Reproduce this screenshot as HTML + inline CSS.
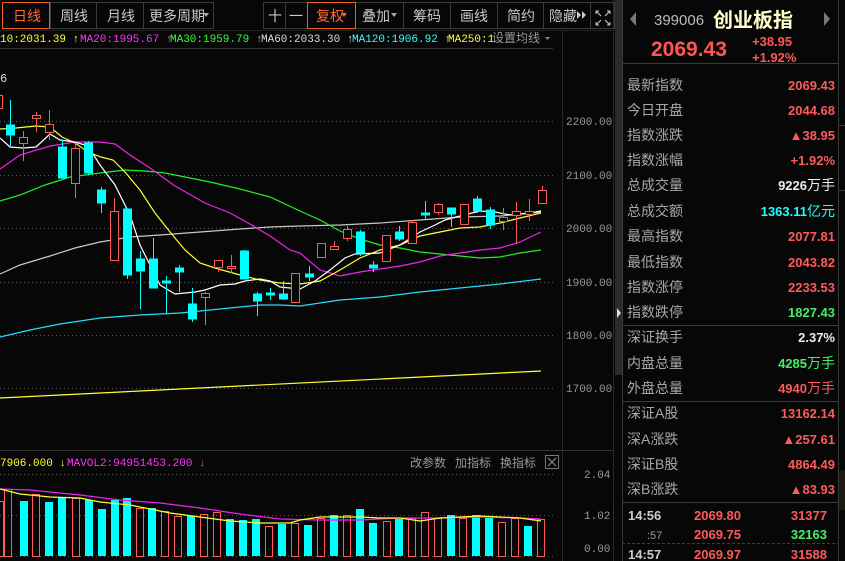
<!DOCTYPE html>
<html><head><meta charset="utf-8"><style>
html,body{margin:0;padding:0;background:#070707;width:845px;height:561px;overflow:hidden}
svg{display:block}
.t{font-family:"Liberation Sans","Noto Sans CJK SC",sans-serif}
.m{font-family:"Liberation Mono","Noto Sans CJK SC",monospace}
</style></head><body>
<svg width="845" height="561" viewBox="0 0 845 561" xmlns="http://www.w3.org/2000/svg">
<rect width="845" height="561" fill="#070707"/>
<!-- toolbar -->
<g fill="none" stroke="#3a3a3a">
<rect x="50.5" y="2.5" width="46" height="26"/><rect x="96.5" y="2.5" width="47" height="26"/><rect x="143.5" y="2.5" width="70" height="26"/>
<rect x="263.5" y="2.5" width="22" height="26"/><rect x="285.5" y="2.5" width="22" height="26"/>
<rect x="355.5" y="2.5" width="48" height="26"/><rect x="403.5" y="2.5" width="47" height="26"/><rect x="450.5" y="2.5" width="47" height="26"/><rect x="497.5" y="2.5" width="46" height="26"/><rect x="543.5" y="2.5" width="47" height="26"/><rect x="590.5" y="2.5" width="24" height="26"/>
</g>
<rect x="2.5" y="2.5" width="47" height="26" fill="none" stroke="#e8641e"/>
<rect x="307.5" y="2.5" width="48" height="26" fill="none" stroke="#e8641e"/>
<g class="t" font-size="14" fill="#c8c8c8">
<text x="13" y="21" fill="#ff6a2a">日线</text><text x="60" y="21">周线</text><text x="107" y="21">月线</text><text x="149" y="21">更多周期</text>
<text x="268" y="21">十</text><text x="289" y="21">一</text>
<text x="316" y="21" fill="#ff6a2a">复权</text><text x="362" y="21">叠加</text><text x="413" y="21">筹码</text><text x="460" y="21">画线</text><text x="507" y="21">简约</text><text x="549" y="21">隐藏</text>
</g>
<g fill="#aaa"><path d="M203 13h6l-3 4z"/><path d="M391 13h6l-3 4z"/></g>
<path d="M341 13h6l-3 4z" fill="#ff6a2a"/>
<path d="M577 11l4 4-4 4zM582 11l4 4-4 4z" fill="#ccc"/>
<g stroke="#ccc" fill="none" stroke-width="1"><path d="M596 11l5 5M596 11v3M596 11h3M610 11l-5 5M610 11v3M610 11h-3M596 25l5-5M596 25v-3M596 25h3M610 25l-5-5M610 25v-3M610 25h-3"/></g>
<line x1="0" y1="30.5" x2="612" y2="30.5" stroke="#222"/>
<!-- legend -->
<g class="m" font-size="11">
<text x="0" y="42" fill="#ffff33">10:2031.39 ↑</text>
<text x="80" y="42" fill="#ff33ff">MA20:1995.67 ↑</text>
<text x="170" y="42" fill="#33ff33">MA30:1959.79 ↑</text>
<text x="261" y="42" fill="#dddddd">MA60:2033.30 ↑</text>
<text x="352" y="42" fill="#33ffff">MA120:1906.92 ↑</text>
<text x="448" y="42" fill="#ffff33">MA250:1</text>
</g>
<text x="492" y="42" class="t" font-size="12" fill="#999">设置均线</text>
<path d="M545 37h5l-2.5 3z" fill="#888"/>
<line x1="0" y1="48.5" x2="553" y2="48.5" stroke="#333"/>
<text x="0" y="82" class="m" font-size="12" fill="#ddd">6</text>
<!-- axis separators -->
<line x1="562.5" y1="30" x2="562.5" y2="561" stroke="#2a2a2a"/>
<line x1="613.5" y1="0" x2="613.5" y2="561" stroke="#2a2a2a"/>
<rect x="615" y="0" width="7" height="375" fill="#2b2b2b"/>
<path d="M617 308l4 5-4 5z" fill="#ddd"/>
<!-- grid -->
<g stroke="#555" stroke-dasharray="1 3">
<line x1="0" y1="121.5" x2="555" y2="121.5"/><line x1="0" y1="175.5" x2="555" y2="175.5"/><line x1="0" y1="228.5" x2="555" y2="228.5"/><line x1="0" y1="282.5" x2="555" y2="282.5"/><line x1="0" y1="335.5" x2="555" y2="335.5"/><line x1="0" y1="388.5" x2="555" y2="388.5"/>
<line x1="0" y1="474.5" x2="555" y2="474.5"/><line x1="0" y1="515.5" x2="555" y2="515.5"/><line x1="0" y1="556.5" x2="555" y2="556.5"/>
</g>
<g class="m" font-size="11" fill="#999">
<text x="566" y="125">2200.00</text><text x="566" y="179">2100.00</text><text x="566" y="232">2000.00</text><text x="566" y="286">1900.00</text><text x="566" y="339">1800.00</text><text x="566" y="392">1700.00</text>
<text x="584" y="478">2.04</text><text x="584" y="519">1.02</text><text x="584" y="552">0.00</text>
</g>
<!-- MA lines -->
<g fill="none" stroke-width="1.2">
<polyline stroke="#ffff33" points="0,398 541,371"/>
<polyline stroke="#22ddff" points="0,337 30,330 60,324 100,318 140,315 180,313 220,309 260,305 280,305 300,306 340,300 380,297 420,292 460,288 500,284 541,279"/>
<polyline stroke="#c8c8c8" points="0,274 20,265 50,256 75,248 100,242 130,237 160,235 200,232 240,229 270,227 300,226 340,225 380,223 420,220 460,217 500,216 520,214 541,212"/>
<polyline stroke="#22ee22" points="0,201 20,195 45,185 70,177 100,173 125,170 145,171 165,173 185,177 210,182 240,189 270,197 300,211 320,220 340,231 360,239 380,245 400,248 420,252 440,254 460,256 480,258 500,257 520,253 541,250"/>
<polyline stroke="#ee22ee" points="0,169 20,155 50,146 75,142 100,142 115,144 130,155 150,168 175,186 205,203 230,213 250,224 270,236 290,250 300,253 320,270 340,276 360,272 380,269 400,266 420,262 440,256 460,253 480,250 500,248 520,242 541,232"/>
<polyline stroke="#ffff33" points="0,129 16,128 36,126 50,127 62,137 75,143 88,152 101,157 113,160 125,172 140,190 155,213 170,232 185,250 200,263 215,268 240,275 260,280 280,283 300,284 320,281 340,270 360,258 380,250 400,245 420,236 440,232 460,228 480,227 500,223 520,218 541,213"/>
<polyline stroke="#ffffff" points="0,138 10,147 23,148 36,147 50,134 60,140 75,142 88,146 100,165 115,185 130,215 140,245 150,265 160,285 175,294 195,292 205,290 220,285 235,284 245,281 260,279 270,281 280,287 300,289 315,281 330,270 345,258 355,254 380,253 400,245 420,232 435,225 445,220 460,216 480,211 495,212 510,215 530,213 541,211"/>
</g>
<!-- candles -->
<g stroke="#00ffff" fill="#00ffff">
<line x1="10.5" y1="100" x2="10.5" y2="146"/><rect x="6.5" y="125" width="8" height="10"/>
<line x1="62.5" y1="140" x2="62.5" y2="178"/><rect x="58.5" y="147" width="8" height="31"/>
<line x1="88.5" y1="141" x2="88.5" y2="175"/><rect x="84.5" y="143" width="8" height="30"/>
<line x1="101.5" y1="187" x2="101.5" y2="213"/><rect x="97.5" y="190" width="8" height="13"/>
<line x1="127.5" y1="209" x2="127.5" y2="279"/><rect x="123.5" y="209" width="8" height="66"/>
<line x1="140.5" y1="251" x2="140.5" y2="309"/><rect x="136.5" y="259" width="8" height="12"/>
<line x1="153.5" y1="238" x2="153.5" y2="288"/><rect x="149.5" y="259" width="8" height="29"/>
<line x1="166.5" y1="276" x2="166.5" y2="313"/><rect x="162.5" y="281" width="8" height="2"/>
<line x1="179.5" y1="265" x2="179.5" y2="292"/><rect x="175.5" y="268" width="8" height="4"/>
<line x1="192.5" y1="288" x2="192.5" y2="322"/><rect x="188.5" y="304" width="8" height="15"/>
<line x1="244.5" y1="250" x2="244.5" y2="279"/><rect x="240.5" y="251" width="8" height="28"/>
<line x1="257.5" y1="292" x2="257.5" y2="316"/><rect x="253.5" y="294" width="8" height="7"/>
<line x1="270.5" y1="288" x2="270.5" y2="300"/><rect x="266.5" y="293" width="8" height="2"/>
<line x1="283.5" y1="281" x2="283.5" y2="300"/><rect x="279.5" y="294" width="8" height="5"/>
<line x1="309.5" y1="266" x2="309.5" y2="281"/><rect x="305.5" y="274" width="8" height="3"/>
<line x1="360.5" y1="230" x2="360.5" y2="256"/><rect x="356.5" y="232" width="8" height="21"/>
<line x1="373.5" y1="261" x2="373.5" y2="272"/><rect x="369.5" y="265" width="8" height="3"/>
<line x1="399.5" y1="226" x2="399.5" y2="241"/><rect x="395.5" y="232" width="8" height="7"/>
<line x1="425.5" y1="201" x2="425.5" y2="219"/><rect x="421.5" y="213" width="8" height="2"/>
<line x1="451.5" y1="208" x2="451.5" y2="227"/><rect x="447.5" y="208" width="8" height="6"/>
<line x1="477.5" y1="196" x2="477.5" y2="213"/><rect x="473.5" y="199" width="8" height="12"/>
<line x1="490.5" y1="207" x2="490.5" y2="229"/><rect x="486.5" y="210" width="8" height="15"/>
</g>
<g stroke="#ff5a5a" fill="#070707">
<rect x="-4.5" y="95.5" width="7" height="13"/>
<line x1="23.5" y1="131" x2="23.5" y2="161"/><rect x="19.5" y="137.5" width="8" height="6"/>
<line x1="36.5" y1="112" x2="36.5" y2="132"/><rect x="32.5" y="115.5" width="8" height="3"/>
<line x1="49.5" y1="110" x2="49.5" y2="140"/><rect x="45.5" y="124.5" width="8" height="8"/>
<line x1="75.5" y1="143" x2="75.5" y2="198"/><rect x="71.5" y="148.5" width="8" height="35"/>
<line x1="114.5" y1="198" x2="114.5" y2="260"/><rect x="110.5" y="211.5" width="8" height="49"/>
<line x1="205.5" y1="292" x2="205.5" y2="325"/><rect x="201.5" y="293.5" width="8" height="4"/>
<line x1="218.5" y1="260" x2="218.5" y2="272"/><rect x="214.5" y="260.5" width="8" height="7"/>
<line x1="231.5" y1="255" x2="231.5" y2="273"/><rect x="227.5" y="266.5" width="8" height="2"/>
<rect x="291.5" y="273.5" width="8" height="29"/>
<rect x="317.5" y="243.5" width="8" height="14"/>
<line x1="334.5" y1="241" x2="334.5" y2="250"/><rect x="330.5" y="246.5" width="8" height="3"/>
<line x1="347.5" y1="226" x2="347.5" y2="241"/><rect x="343.5" y="229.5" width="8" height="9"/>
<rect x="382.5" y="235.5" width="8" height="26"/>
<line x1="412.5" y1="220" x2="412.5" y2="243"/><rect x="408.5" y="222.5" width="8" height="21"/>
<line x1="438.5" y1="203" x2="438.5" y2="215"/><rect x="434.5" y="204.5" width="8" height="8"/>
<rect x="460.5" y="204.5" width="8" height="20"/>
<line x1="503.5" y1="208" x2="503.5" y2="230"/><rect x="499.5" y="217.5" width="8" height="4"/>
<line x1="516.5" y1="202" x2="516.5" y2="244"/><rect x="512.5" y="211.5" width="8" height="4"/>
<line x1="529.5" y1="199" x2="529.5" y2="221"/><rect x="525.5" y="211.5" width="8" height="3"/>
<line x1="542.5" y1="186" x2="542.5" y2="204"/><rect x="538.5" y="190.5" width="8" height="13"/>
</g>
<!-- volume panel -->
<line x1="0" y1="450.5" x2="613" y2="450.5" stroke="#333"/>
<g class="m" font-size="11">
<text x="0" y="466" fill="#ffff33">7906.000 ↓</text>
<text x="67" y="466" fill="#ff33ff">MAVOL2:94951453.200 ↓</text>
</g>
<g class="t" font-size="12" fill="#999"><text x="410" y="467">改参数</text><text x="455" y="467">加指标</text><text x="500" y="467">换指标</text></g>
<rect x="545.5" y="455.5" width="13" height="13" fill="none" stroke="#777"/>
<path d="M548 458l8 8M556 458l-8 8" stroke="#999"/>
<g fill="#00ffff">
<rect x="20" y="501" width="8" height="55"/><rect x="45" y="502" width="8" height="54"/><rect x="58" y="497" width="8" height="59"/><rect x="85" y="500" width="8" height="56"/><rect x="98" y="509" width="8" height="47"/><rect x="111" y="500" width="8" height="56"/><rect x="123" y="498" width="8" height="58"/><rect x="148" y="508" width="8" height="48"/><rect x="187" y="516" width="8" height="40"/><rect x="226" y="519" width="8" height="37"/><rect x="239" y="520" width="8" height="36"/><rect x="252" y="519" width="8" height="37"/><rect x="278" y="524" width="8" height="32"/><rect x="304" y="525" width="8" height="31"/><rect x="330" y="515" width="8" height="41"/><rect x="356" y="509" width="8" height="47"/><rect x="369" y="523" width="8" height="33"/><rect x="395" y="519" width="8" height="37"/><rect x="447" y="515" width="8" height="41"/><rect x="472" y="515" width="8" height="41"/><rect x="485" y="518" width="8" height="38"/><rect x="524" y="526" width="8" height="30"/>
</g>
<g fill="none" stroke="#ff5a5a">
<rect x="-3.5" y="501.5" width="7" height="55"/><rect x="4.5" y="489.5" width="7" height="67"/><rect x="32.5" y="494.5" width="7" height="62"/><rect x="72.5" y="498.5" width="7" height="58"/><rect x="136.5" y="508.5" width="7" height="48"/><rect x="161.5" y="511.5" width="7" height="45"/><rect x="174.5" y="516.5" width="7" height="40"/><rect x="200.5" y="514.5" width="7" height="42"/><rect x="213.5" y="512.5" width="7" height="44"/><rect x="265.5" y="526.5" width="7" height="30"/><rect x="291.5" y="523.5" width="7" height="33"/><rect x="317.5" y="518.5" width="7" height="38"/><rect x="343.5" y="515.5" width="7" height="41"/><rect x="383.5" y="521.5" width="7" height="35"/><rect x="408.5" y="518.5" width="7" height="38"/><rect x="421.5" y="512.5" width="7" height="44"/><rect x="434.5" y="518.5" width="7" height="38"/><rect x="459.5" y="518.5" width="7" height="38"/><rect x="498.5" y="522.5" width="7" height="34"/><rect x="511.5" y="518.5" width="7" height="38"/><rect x="537.5" y="519.5" width="7" height="37"/>
</g>
<g fill="none" stroke-width="1.2">
<polyline stroke="#ee22ee" points="0,489 30,490 60,493 80,495 120,500 160,503 200,508 240,514 280,519 320,520 360,520 400,518 440,518 480,517 520,518 541,519"/>
<polyline stroke="#ffff33" points="0,489 20,494 50,497 80,498 100,502 130,505 150,509 170,513 200,517 230,521 260,523 290,523 300,520 320,517 360,517 380,518 400,518 420,521 440,518 480,516 520,518 541,521"/>
</g>
<!-- right panel -->
<g stroke="#3a3a3a" fill="none">
<line x1="622.5" y1="0" x2="622.5" y2="561"/>
<line x1="838.5" y1="0" x2="838.5" y2="561"/>
<line x1="622" y1="63.5" x2="838" y2="63.5"/>
<line x1="622" y1="325.5" x2="838" y2="325.5"/>
<line x1="622" y1="401.5" x2="838" y2="401.5"/>
<line x1="622" y1="502.5" x2="838" y2="502.5"/>
<line x1="622" y1="543.5" x2="838" y2="543.5" stroke-dasharray="3 2"/>
</g>
<path d="M636 12l-6 7 6 7z" fill="#777"/><path d="M824 12l6 7-6 7z" fill="#777"/>
<text x="654" y="25" class="t" font-size="15" fill="#bbb">399006</text>
<text x="713" y="27" class="t" font-size="20" font-weight="bold" fill="#ffffcc">创业板指</text>
<text x="651" y="56" class="t" font-size="21" font-weight="bold" fill="#ff5555">2069.43</text>
<g class="t" font-size="13" font-weight="bold" fill="#ff5555"><text x="752" y="46">+38.95</text><text x="752" y="62">+1.92%</text></g>
<g class="t" font-size="14" fill="#a8a8a8">
<text x="627" y="90">最新指数</text><text x="627" y="115">今日开盘</text><text x="627" y="140">指数涨跌</text><text x="627" y="165">指数涨幅</text><text x="627" y="190">总成交量</text><text x="627" y="216">总成交额</text><text x="627" y="241">最高指数</text><text x="627" y="267">最低指数</text><text x="627" y="292">指数涨停</text><text x="627" y="317">指数跌停</text>
<text x="627" y="342">深证换手</text><text x="627" y="368">内盘总量</text><text x="627" y="393">外盘总量</text>
<text x="627" y="418">深证A股</text><text x="627" y="444">深A涨跌</text><text x="627" y="469">深证B股</text><text x="627" y="494">深B涨跌</text>
</g>
<g class="t" font-size="13" font-weight="bold" text-anchor="end" fill="#ff5a5a">
<text x="835" y="90">2069.43</text><text x="835" y="115">2044.68</text><text x="835" y="140">▲38.95</text><text x="835" y="165">+1.92%</text>
<text x="835" y="190" fill="#eee">9226<tspan font-weight="normal" font-size="14">万手</tspan></text>
<text x="835" y="216" fill="#22ffff">1363.11<tspan font-weight="normal" font-size="14">亿元</tspan></text>
<text x="835" y="241">2077.81</text><text x="835" y="267">2043.82</text><text x="835" y="292">2233.53</text><text x="835" y="317" fill="#44ee66">1827.43</text>
<text x="835" y="342" fill="#eee">2.37%</text>
<text x="835" y="368" fill="#44ee66">4285<tspan font-weight="normal" font-size="14">万手</tspan></text>
<text x="835" y="393">4940<tspan font-weight="normal" font-size="14">万手</tspan></text>
<text x="835" y="418">13162.14</text><text x="835" y="444">▲257.61</text><text x="835" y="469">4864.49</text><text x="835" y="494">▲83.93</text>
</g>
<g class="t" font-size="13" font-weight="bold">
<text x="628" y="520" fill="#ccc">14:56</text><text x="694" y="520" fill="#ff5a5a">2069.80</text><text x="827" y="520" fill="#ff5a5a" text-anchor="end">31377</text>
<text x="647" y="539" fill="#999" font-weight="normal" font-size="11">:57</text><text x="694" y="539" fill="#ff5a5a">2069.75</text><text x="827" y="539" fill="#44ee66" text-anchor="end">32163</text>
<text x="628" y="559" fill="#ccc">14:57</text><text x="694" y="559" fill="#ff5a5a">2069.97</text><text x="827" y="559" fill="#ff5a5a" text-anchor="end">31588</text>
</g>
<!-- far right partial strip -->
<g stroke="#3a3a3a"><line x1="839" y1="125.5" x2="845" y2="125.5"/><line x1="839" y1="190.5" x2="845" y2="190.5"/><line x1="839" y1="508.5" x2="845" y2="508.5"/></g>
<rect x="839" y="470" width="6" height="40" fill="#1a1a10"/>
</svg>
</body></html>
